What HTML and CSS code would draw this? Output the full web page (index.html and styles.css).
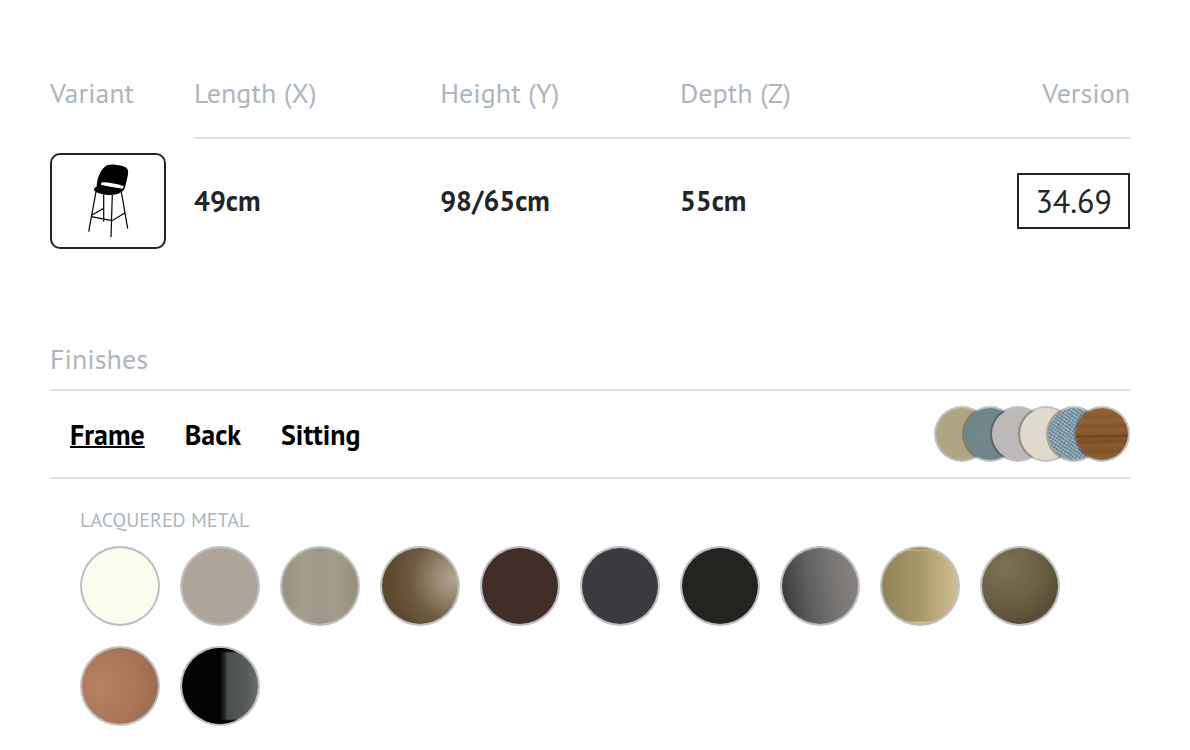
FILE: index.html
```html
<!DOCTYPE html>
<html lang="en">
<head>
<meta charset="utf-8">
<meta name="viewport" content="width=device-width, initial-scale=1">
<title>Product variant and finishes</title>
<link rel="stylesheet" href="styles.css">
</head>
<body>
<main class="product">
  <table class="variants">
    <thead>
      <tr>
        <th class="col-variant" scope="col">Variant</th>
        <th class="col-length" scope="col">Length (X)</th>
        <th class="col-height" scope="col">Height (Y)</th>
        <th class="col-depth" scope="col">Depth (Z)</th>
        <th class="col-version" scope="col">Version</th>
      </tr>
    </thead>
    <tbody>
      <tr>
        <td>
          <button class="variant" type="button" aria-label="Bar stool">
            <svg class="stool" viewBox="0 0 60 90" aria-hidden="true">
              <path d="M18.7 30.5C18.7 24 21.5 16 26 11.500C29 8.500 33 8.300 37 8.800C42 9.300 46 10 48.500 12C50.500 13.800 50.400 17 49.700 20L47 31.500C46.600 33.500 45.500 34.500 43.800 35.800C40 38.600 34 39.600 28 38.800C22 38 18 36.500 16.500 35C15.400 33.500 16 31.800 18.700 30.500Z"/>
              <path class="gap" d="M24.500 26.300C32 26.500 39 27.800 45.800 30.200L45 32.800C38 32 30 30.300 23 28.700C23 27.300 23.500 26.400 24.500 26.300Z"/>
              <path class="legs" d="M18 35.700L10.700 75.700M25.700 38.300V65.700M34.300 39L33 81M43.300 35.700L49.700 72.700M13.700 59.300L25.700 52.300M13.300 60.700L34 64.700L46.700 57"/>
            </svg>
          </button>
        </td>
        <td class="size">49cm</td>
        <td class="size">98/65cm</td>
        <td class="size">55cm</td>
        <td class="version-cell"><button class="version" type="button">34.69</button></td>
      </tr>
    </tbody>
  </table>

  <section class="finishes">
    <h2 class="heading">Finishes</h2>
    <div class="bar">
      <nav class="parts" aria-label="Parts">
        <a class="part current" href="#frame" aria-current="true">Frame</a>
        <a class="part" href="#back">Back</a>
        <a class="part" href="#sitting">Sitting</a>
      </nav>
      <div class="stack" role="img" aria-label="Selected finishes">
        <span class="chip sand"></span>
        <span class="chip teal"></span>
        <span class="chip grey"></span>
        <span class="chip cream"></span>
        <span class="chip denim"></span>
        <span class="chip wood"></span>
      </div>
    </div>
    <div class="group" id="frame">
      <h3 class="group-title">LACQUERED METAL</h3>
      <div class="swatches">
        <button class="swatch white" type="button" aria-label="White"></button>
        <button class="swatch taupe" type="button" aria-label="Taupe"></button>
        <button class="swatch stone" type="button" aria-label="Stone"></button>
        <button class="swatch bronze" type="button" aria-label="Bronze"></button>
        <button class="swatch brown" type="button" aria-label="Brown"></button>
        <button class="swatch slate" type="button" aria-label="Slate"></button>
        <button class="swatch black" type="button" aria-label="Black"></button>
        <button class="swatch steel" type="button" aria-label="Steel"></button>
        <button class="swatch gold" type="button" aria-label="Gold"></button>
        <button class="swatch brass" type="button" aria-label="Aged brass"></button>
        <button class="swatch copper" type="button" aria-label="Copper"></button>
        <button class="swatch gloss" type="button" aria-label="Gloss black"></button>
      </div>
    </div>
  </section>
</main>
</body>
</html>
```
FILE: styles.css
```css
* { box-sizing: border-box; }

body {
  margin: 0;
  background: #fff;
  color: #212529;
  font-family: "PT Sans", "Lato", "Noto Sans", sans-serif;
  font-size: 28px;
  line-height: 42px;
}

button {
  margin: 0;
  padding: 0;
  background: none;
  color: inherit;
  font: inherit;
  cursor: pointer;
}

.product { padding: 50px 60px 24px 50px; }

.variants {
  width: 100%;
  table-layout: fixed;
  border-collapse: separate;
  border-spacing: 0;
}

.variants th {
  height: 89px;
  padding: 0 0 2px;
  border-bottom: 2px solid #dee2e6;
  color: #adb5bd;
  font-weight: 400;
  text-align: left;
}

.variants td { padding: 14px 0; }
.variants .col-variant { width: 144px; border-bottom-color: transparent; }
.col-length { width: 22.8%; }
.col-height { width: 22.2%; }
.variants .col-version,
.version-cell { text-align: right; }
.size { font-weight: 700; }

.variant {
  display: flex;
  align-items: center;
  justify-content: center;
  width: 116px;
  height: 96px;
  border: 2px solid #212529;
  border-radius: 10px;
}

.stool { width: 60px; height: 90px; }
.stool .gap { fill: #fff; }
.stool .legs { fill: none; stroke: #000; stroke-width: 1.2; }

.version {
  padding: 0 16px;
  height: 56px;
  border: 2px solid #212529;
  font-size: 32px;
}

.finishes { margin-top: 75px; }

.heading {
  margin: 0;
  padding-bottom: 9px;
  border-bottom: 2px solid #dee2e6;
  color: #adb5bd;
  font-size: 28px;
  font-weight: 400;
}

.bar {
  display: flex;
  align-items: center;
  justify-content: space-between;
  padding: 15px 0;
  border-bottom: 2px solid #dee2e6;
}

.parts { display: flex; gap: 40px; padding: 2px 0 0 20px; }

.part {
  color: #000;
  font-weight: 700;
  text-decoration: none;
}

.part.current {
  text-decoration: underline;
  text-decoration-thickness: 2px;
  text-decoration-skip-ink: none;
}

.stack { display: flex; padding-left: 28px; }

.chip,
.swatch {
  border: 2px solid rgba(0, 0, 0, 0.25);
  border-radius: 50%;
}

.chip { width: 56px; height: 56px; margin-left: -28px; }
.sand { background: #b0a483 padding-box; }
.teal { background: radial-gradient(circle, #76898d, #6b8287) padding-box; }
.grey { background: #bdb9b9 padding-box; }
.cream { background: #dfdaca padding-box; }
.denim {
  background:
    repeating-linear-gradient(35deg, rgba(178, 197, 209, 0.6) 0 1px, transparent 1px 3px) padding-box,
    repeating-linear-gradient(125deg, #67808f 0 1px, #8199a7 1px 3px) padding-box;
}
.wood {
  background: linear-gradient(179deg, #946637 0%, #8a5a2e 18%, #936337 25%, #82552b 35%, #8e5d30 42%, #87572b 50%, #6c4522 54%, #85562b 59%, #774c25 65%, #8c5c30 70%, #82542a 82%, #936335 100%) padding-box;
}

.group { padding: 28px 0 0 30px; }

.group-title {
  margin: 0 0 12px;
  color: #adb5bd;
  font-size: 20px;
  font-weight: 400;
  line-height: 27px;
}

.swatches { display: flex; flex-wrap: wrap; gap: 20px; }
.swatch { width: 80px; height: 80px; }
.white { background: #fbfbee padding-box; }
.taupe { background: #aea49a padding-box; }
.stone { background: linear-gradient(90deg, #98927f, #a49d8c 30%, #9f9787 50%, #a39b8a 70%, #969079) padding-box; }
.bronze { background: radial-gradient(circle at 95% 40%, #b3a390 0%, #96836d 25%, #6f5b43 50%, #5e4a2f 75%, #57452a 100%) padding-box; }
.brown { background: #422e29 padding-box; }
.slate { background: #3b3a41 padding-box; }
.black { background: #242320 padding-box; }
.steel { background: linear-gradient(80deg, #3b3a38 5%, #60605e 38%, #777573 65%, #8b8582 100%) padding-box; }
.gold {
  background:
    linear-gradient(#8f8059 0 1px, #d6c48c 2px, transparent 3px, transparent 73px, #e0cd97 75px) padding-box,
    linear-gradient(90deg, #938456, #a5976a 48%, #bead7e 75%, #d0be93) padding-box;
}
.brass { background: radial-gradient(circle at 32% 25%, #7d7152, #6b6044 45%, #5a4d36 75%, #5f5439 100%) padding-box; }
.copper { background: radial-gradient(circle at 25% 50%, #b88064, #aa7559 55%, #94664c 100%) padding-box; }
.gloss {
  background:
    linear-gradient(#000 0 3px, transparent 5px, transparent 71px, #000 73px) padding-box,
    linear-gradient(90deg, #030403 50%, #242728 56%, #4b4e4f 60%, #555859 80%, #666a6a) padding-box;
}
```
